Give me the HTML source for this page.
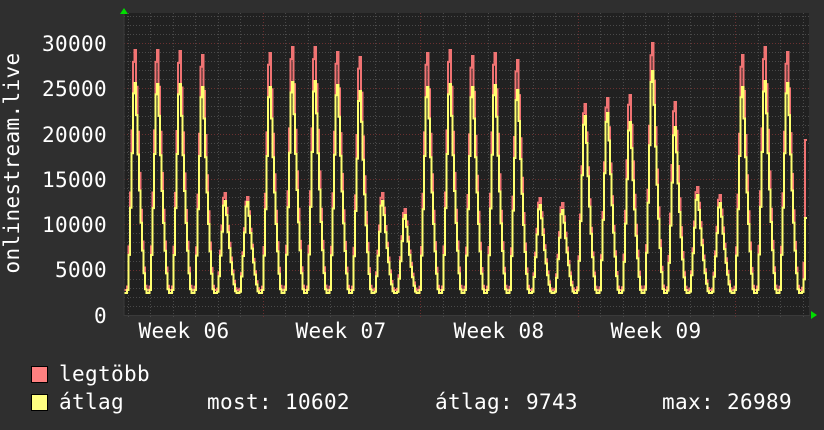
<!DOCTYPE html>
<html><head><meta charset="utf-8"><style>
body{margin:0;background:#2f2f2f;}
svg{display:block}
text{font-family:"DejaVu Sans Mono","Liberation Mono",monospace;font-size:21px;fill:#fff;letter-spacing:0.35px}
</style></head><body>
<svg id="g" width="824" height="430" xmlns="http://www.w3.org/2000/svg">
<rect width="824" height="430" fill="#2f2f2f"/>
<rect x="124" y="13" width="685" height="302" fill="#212121"/>
<g id="grid"></g>
<polyline id="red" fill="none" stroke="#f07373" stroke-width="2" points=""/>
<polyline id="yel" fill="none" stroke="#ffff70" stroke-width="2" points=""/>
<line x1="124" y1="13" x2="124" y2="316" stroke="#3a3a3a" stroke-width="1"/>
<line x1="124" y1="315.5" x2="810" y2="315.5" stroke="#3a3a3a" stroke-width="1"/>
<polygon points="120,14 124,8 128,14" fill="#00dd00"/>
<polygon points="811,311 817,315 811,319" fill="#00dd00"/>
<g text-anchor="end">
<text x="107" y="51">30000</text>
<text x="107" y="96">25000</text>
<text x="107" y="142">20000</text>
<text x="107" y="187">15000</text>
<text x="107" y="232">10000</text>
<text x="107" y="277">5000</text>
<text x="107" y="323">0</text>
</g>
<text transform="translate(19,163) rotate(-90)" text-anchor="middle">onlinestream.live</text>
<g text-anchor="middle">
<text x="184" y="338">Week 06</text>
<text x="341" y="338">Week 07</text>
<text x="499" y="338">Week 08</text>
<text x="656" y="338">Week 09</text>
</g>
<rect x="31.5" y="366.5" width="16" height="16" fill="#ff8080" stroke="#000"/>
<rect x="31.5" y="394.5" width="16" height="16" fill="#ffff80" stroke="#000"/>
<text x="59" y="381">legtöbb</text>
<text x="59" y="409">átlag</text>
<text x="207" y="409">most: 10602</text>
<text x="435" y="409">átlag: 9743</text>
<text x="662" y="409">max: 26989</text>
</svg>
<script>
var NS="http://www.w3.org/2000/svg",grid=document.getElementById("grid");
function ln(x1,y1,x2,y2,c){var l=document.createElementNS(NS,"line");l.setAttribute("x1",x1);l.setAttribute("y1",y1);l.setAttribute("x2",x2);l.setAttribute("y2",y2);l.setAttribute("stroke",c);l.setAttribute("stroke-width","1");l.setAttribute("stroke-dasharray","1,2");grid.appendChild(l);}
var pxk=272/30000;
for(var v=0;v<=33000;v+=1000){var y=Math.round(315-v*pxk)+0.5;if(y<13)break;ln(124,y,809,y,(v%5000==0&&v>0)?"#6a3030":"#4a4a4a");}
for(var k=0;k<31;k++){var x=Math.round(127.5+22.5*k)+0.5;if(x>809)break;var maj=[262.5,420,577.5,735].some(function(m){return Math.abs(m-(127.5+22.5*k))<1});ln(x,13,x,318,maj?"#6a3030":"#4a4a4a");}
var R=[50,50,51,55,193,197,53,47,47,52,57,193,209,53,50,56,53,60,198,203,104,98,95,43,102,187,195,55,47,52,140];
var Y=[83,84,84,87,201,202,87,82,81,85,91,201,215,87,84,87,85,90,205,210,116,113,122,71,127,195,203,87,81,83,218];
function prof(off,pk,base){
  if(off<-7)return base;
  if(off<-0.5){var f=(off+7)/6.5;return base-(base-pk)*Math.pow(f,1.3);}
  if(off<=2)return pk;
  if(off<12){var g=(off-2)/10;return base-(base-pk)*0.88*Math.pow(1-g,1.5);}
  return base;
}
function series(P,base){var pts=[];var step=1.5;
for(var x=124;x<=807;x+=step){var xc=x+step/2;var d=xc-134.5,k=Math.floor((d+10)/22.5);var off=d-22.5*k;
 var pk=P[Math.max(0,Math.min(30,k))];var val=prof(off,pk,base);
 if(xc>=805.5){val=P[30];}
 var x2=Math.min(x+step,807);
 pts.push(x.toFixed(1)+","+val.toFixed(1));pts.push(x2.toFixed(1)+","+val.toFixed(1));}
return pts.join(" ");}
document.getElementById("red").setAttribute("points",series(R,290));
document.getElementById("yel").setAttribute("points",series(Y,293));
</script>
</body></html>
